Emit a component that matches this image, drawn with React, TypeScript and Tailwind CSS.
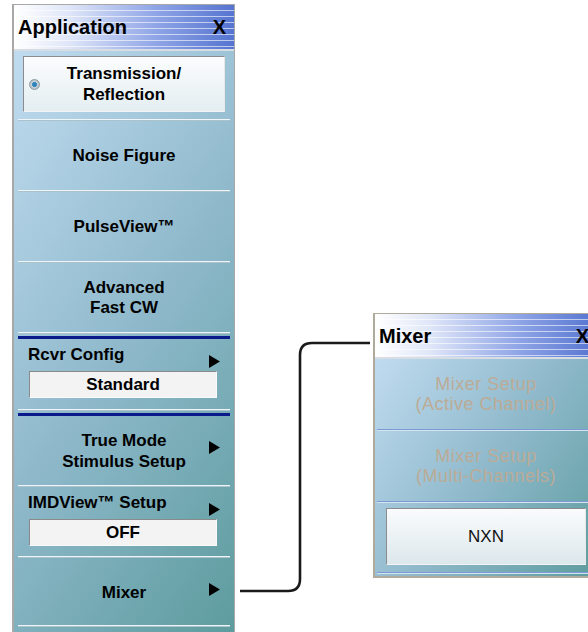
import React from "react";

const FONT = { fontFamily: '"Liberation Sans", Arial, sans-serif' };

function Arrow({ className = "" }: { className?: string }) {
  return (
    <svg width="11" height="13" viewBox="0 0 11 13" className={className}>
      <polygon points="0,0 11,6.5 0,13" fill="#000" />
    </svg>
  );
}

function Sep() {
  return <div className="mx-[4px] h-[2px] bg-[#eef4f7] border-b border-[#a9c2cc]" />;
}

function BlueSep() {
  return <div className="mx-[4px] h-[3px] bg-[#0a1a8a]" />;
}

function TitleBar({ title, h }: { title: string; h: string }) {
  return (
    <div className={`relative ${h} border-b-2 border-[#d8dde4] overflow-hidden`}>
      <div className="absolute inset-0 bg-[linear-gradient(90deg,#ffffff_0%,#dfe6f8_25%,#8ea4e6_65%,#5574d0_100%)]" />
      <div className="absolute inset-0 bg-[repeating-linear-gradient(180deg,transparent_0px,transparent_5px,rgba(255,255,255,0.6)_5px,rgba(255,255,255,0.6)_6px)]" />
      <div className="relative flex h-full items-center justify-between pl-[4px] pr-[8px]">
        <span className="text-[20px] font-bold text-black leading-none">{title}</span>
        <span className="text-[20px] font-bold text-black leading-none">X</span>
      </div>
    </div>
  );
}

export default function App() {
  return (
    <div className="relative w-[588px] h-[632px] bg-white overflow-hidden" style={FONT}>
      {/* Application panel */}
      <div className="absolute left-[12px] top-[4px] w-[223px] h-[628px] border-l-2 border-t border-r border-[#a8a8a8] bg-[#d0d0d0] flex flex-col">
        <TitleBar title="Application" h="h-[46px]" />
        <div className="flex-1 bg-[linear-gradient(125deg,#c0dbf0_0%,#8fb9cb_50%,#5d9c9e_100%)] flex flex-col text-black font-bold text-[17px]">
          <div className="h-[68px] pt-[5px] px-[9px]">
            <div className="relative h-[56px] border border-[#8c8c8c] border-b-[#f4f4f4] border-r-[#e8e8e8] bg-[linear-gradient(180deg,#fbfcfd_0%,#e4eef1_100%)] flex items-center justify-center leading-[21px] text-center">
              <span className="absolute left-[5px] top-[22px] w-[11px] h-[11px] rounded-full bg-[radial-gradient(circle,#1f7fb8_0%,#3d8ec0_35%,#c8d2d8_45%,#a4adb4_100%)] border border-[#8a9aa4]" />
              <span>Transmission/<br />Reflection</span>
            </div>
          </div>
          <Sep />
          <div className="h-[69px] flex items-center justify-center">Noise Figure</div>
          <Sep />
          <div className="h-[69px] flex items-center justify-center">PulseView™</div>
          <Sep />
          <div className="h-[69px] flex items-center justify-center text-center leading-[20px]">Advanced<br />Fast CW</div>
          <Sep />
          <div className="h-[2px]" />
          <BlueSep />
          <div className="h-[70px] pl-[14px] pr-[17px] pt-[6px] relative">
            <div className="leading-[20px]">Rcvr Config</div>
            <Arrow className="absolute right-[14px] top-[16px]" />
            <div className="mt-[6px] ml-[1px] h-[27px] border border-[#8a8a8a] border-b-[#fafafa] border-r-[#fafafa] bg-[#f3f3f3] flex items-center justify-center">Standard</div>
          </div>
          <Sep />
          <div className="h-[2px]" />
          <BlueSep />
          <div className="h-[69px] relative flex items-center justify-center text-center leading-[21px]">
            <span>True Mode<br />Stimulus Setup</span>
            <Arrow className="absolute right-[14px] top-[25px]" />
          </div>
          <Sep />
          <div className="h-[69px] pl-[14px] pr-[17px] pt-[6px] relative">
            <div className="leading-[20px]">IMDView™ Setup</div>
            <Arrow className="absolute right-[14px] top-[16px]" />
            <div className="mt-[6px] ml-[1px] h-[27px] border border-[#8a8a8a] border-b-[#fafafa] border-r-[#fafafa] bg-[#f3f3f3] flex items-center justify-center">OFF</div>
          </div>
          <Sep />
          <div className="h-[67px] relative flex items-center justify-center pt-[3px]">
            <span>Mixer</span>
            <Arrow className="absolute right-[14px] top-[25px]" />
          </div>
          <Sep />
          <div className="flex-1" />
        </div>
      </div>

      {/* Mixer panel */}
      <div className="absolute left-[373px] top-[313px] w-[224px] h-[265px] border-l-2 border-t border-b-2 border-[#b0aa9c] bg-[#d0d0d0] flex flex-col">
        <TitleBar title="Mixer" h="h-[45px]" />
        <div className="flex-1 bg-[linear-gradient(125deg,#c0dbf0_0%,#8fb9cb_50%,#5d9c9e_100%)] flex flex-col text-[18px] tracking-[0.5px] text-[#bcab96]">
          <div className="h-[70px] flex items-center justify-center text-center leading-[20px]">
            <span>Mixer Setup<br />(Active Channel)</span>
          </div>
          <div className="mx-[2px] h-[2px] bg-[#7d9ad6] border-b border-[#d4e4ee]" />
          <div className="h-[70px] flex items-center justify-center text-center leading-[20px]">
            <span>Mixer Setup<br />(Multi-Channels)</span>
          </div>
          <div className="mx-[2px] h-[2px] bg-[#7d9ad6] border-b border-[#d4e4ee]" />
          <div className="pt-[5px] px-[11px]">
            <div className="h-[57px] border border-[#8c8c8c] border-b-[#f4f4f4] border-r-[#e8e8e8] bg-[linear-gradient(180deg,#fafbfc_0%,#dce8ec_100%)] flex items-center justify-center text-[17px] tracking-normal text-[#111]">NXN</div>
          </div>
          <div className="flex-1" />
          <div className="mx-[2px] h-[2px] bg-[#7d9ad6] border-b border-[#d4e4ee] mb-[2px]" />
        </div>
      </div>

      {/* connector */}
      <svg className="absolute inset-0 pointer-events-none" width="588" height="632">
        <path d="M240 591 H288 Q300 591 300 579 V355 Q300 343 312 343 H370" fill="none" stroke="#1a1a1a" strokeWidth="2.6" />
      </svg>
    </div>
  );
}
